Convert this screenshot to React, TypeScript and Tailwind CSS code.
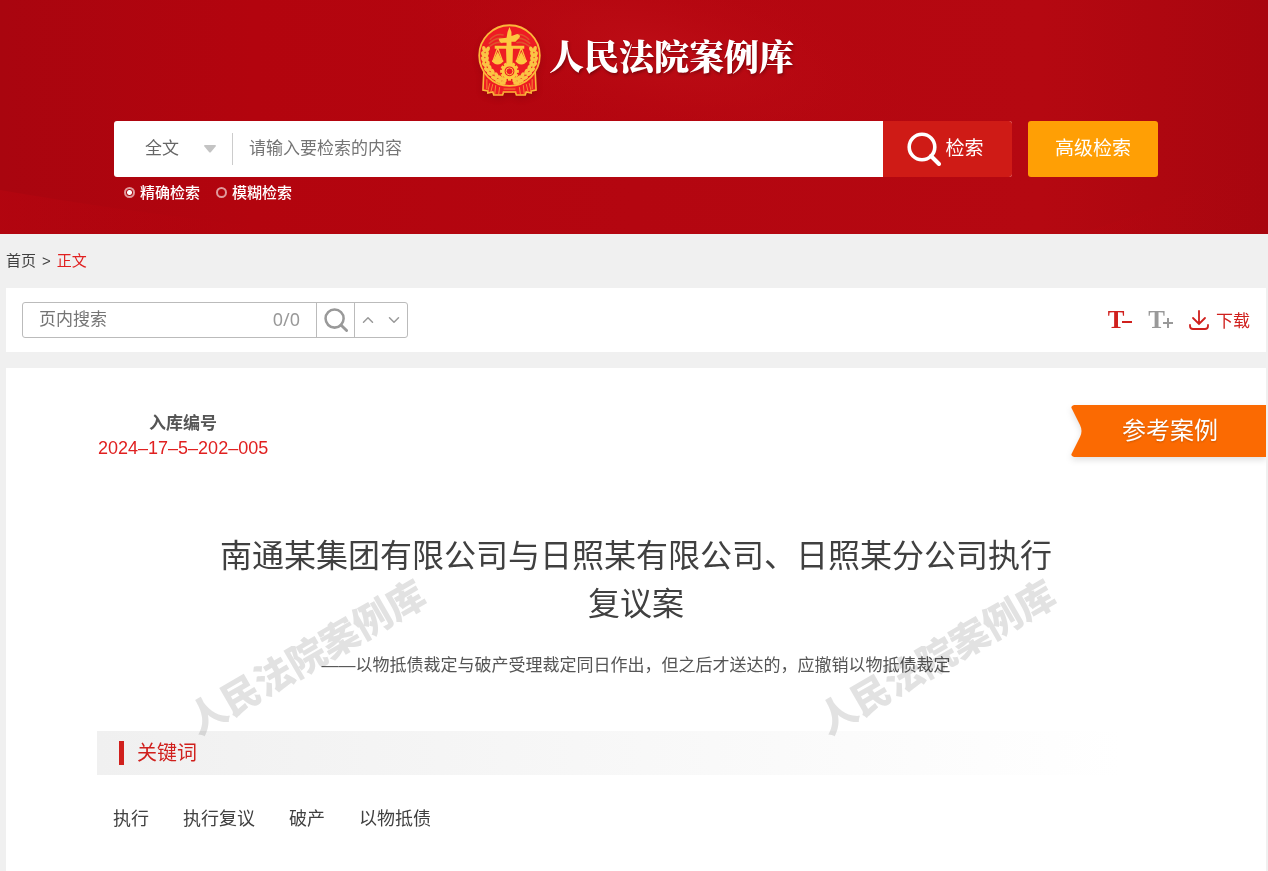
import React from 'react';
import { ChevronDown, ChevronUp } from 'lucide-react';

const keywords = ['执行', '执行复议', '破产', '以物抵债'];

const rayAngles = [0, 30, 60, 90, 120, 150, 180, 210, 240, 270, 300, 330];

const leaves = [
  { x: 8, y: 25, r: 8 },
  { x: 7, y: 30, r: 2 },
  { x: 7, y: 35, r: -6 },
  { x: 8, y: 40, r: -16 },
  { x: 10, y: 45, r: -26 },
  { x: 13, y: 49, r: -36 },
  { x: 17, y: 53, r: -46 },
  { x: 21, y: 56, r: -58 },
  { x: 25, y: 58, r: -70 },
];

const Wreath = () => (
  <g fill="#fbc444">
    {leaves.map((leaf) => (
      <g key={leaf.y} transform={`translate(${leaf.x} ${leaf.y}) rotate(${leaf.r})`}>
        <ellipse cx="-1.8" cy="0" rx="1.9" ry="3.2" transform="rotate(-20)" />
        <ellipse cx="2" cy="0" rx="1.9" ry="3.2" transform="rotate(20)" />
      </g>
    ))}
  </g>
);

const Emblem = () => (
  <svg viewBox="0 0 64 74" className="h-[73px] w-[63px] drop-shadow-md" aria-hidden="true">
    {/* Ribbon */}
    <path d="M6 46 5 67l5 1v2l5-1 1 3h9l1-3h12l1 3h9l1-3 5 1v-2l5-1-1-21z" fill="#ee1c23" stroke="#fbb83a" strokeWidth="1.6" />
    <path d="M9 56v10M12 60l-2 8M15 61l-2 8M18 62l-1 9M22 64l-1 7M26 66h12M25 69h14M42 64l1 7M46 62l1 9M49 61l2 8M52 60l2 8M55 56v10" fill="none" stroke="#f58a30" strokeWidth="1" />
    <circle cx="32" cy="32" r="30.8" fill="#ee1c23" stroke="#fbb83a" strokeWidth="1.8" />
    <path d="M12 16q6-7 14-5M11 20q7-7 15-5M10 24q8-7 15-5M38 11q8-2 14 5M38 15q8-2 15 5M39 19q7-2 15 5" fill="none" stroke="#e0522c" strokeWidth="1.6" />
    <Wreath />
    <g transform="translate(64 0) scale(-1 1)">
      <Wreath />
    </g>
    {/* Pillar and scales */}
    <path d="M30 8 32 3l2 5v4l6-2q4 1 2 4l-4 4h-4v4h13v3H35.500L35 43h-6L28.500 25H17v-3h12v-3h-4q-3 1-4-4l8-1z" fill="#fdc840" />
    <path d="m20 24-5 14h10zm24 0-5 14h10z" fill="none" stroke="#fdc840" strokeWidth="1.2" />
    <path d="m20 28-5 10h10zm24 0-5 10h10z" fill="#fdc840" />
    <path d="M14 37h12q-2 4-6 4t-6-4zm24 0h12q-2 4-6 4t-6-4z" fill="#fdc840" />
    {rayAngles.map((angle) => (
      <path key={angle} d="M30.500 41.500h3v-3h-3z" transform={`rotate(${angle} 32 48)`} fill="#fdc840" />
    ))}
    <circle cx="32" cy="48" r="6.500" fill="#ee1c23" stroke="#fdc840" strokeWidth="3" />
    <circle cx="32" cy="48" r="3.500" fill="#ee1c23" stroke="#fdc840" strokeWidth="1" />
  </svg>
);

const SearchIcon = ({ className }: { className: string }) => (
  <svg viewBox="0 0 34 34" className={className} fill="none" stroke="currentColor" aria-hidden="true">
    <circle cx="15" cy="15" r="12.8" strokeWidth="3.6" />
    <path d="m24 24 8 8" strokeWidth="4" strokeLinecap="round" />
  </svg>
);

const HeaderBackground = () => (
  <svg className="absolute inset-0 h-full w-full" viewBox="0 0 1268 234" preserveAspectRatio="none" aria-hidden="true">
    <defs>
      <linearGradient id="header-base" x1="0" x2="1" y1="0" y2="0">
        <stop offset="0" stopColor="#a9050f" />
        <stop offset="0.2" stopColor="#b3040e" />
        <stop offset="0.5" stopColor="#b40610" />
        <stop offset="0.82" stopColor="#b50811" />
        <stop offset="1" stopColor="#a8060f" />
      </linearGradient>
      <radialGradient id="header-glow">
        <stop offset="0" stopColor="#c01018" stopOpacity="0.7" />
        <stop offset="1" stopColor="#b8060f" stopOpacity="0" />
      </radialGradient>
      <linearGradient id="header-fold" x1="0" x2="1" y1="0" y2="0">
        <stop offset="0" stopColor="#c20510" stopOpacity="0.35" />
        <stop offset="1" stopColor="#b3000d" stopOpacity="0" />
      </linearGradient>
    </defs>
    <path d="M0 0h1268v234H0z" fill="url(#header-base)" />
    <ellipse cx="660" cy="50" rx="260" ry="90" fill="url(#header-glow)" transform="rotate(12 660 50)" />
    <path d="M0 190q150 26 330 44H0z" fill="url(#header-fold)" />
    <path d="M1268 150q-90 55-190 84h190z" fill="url(#header-fold)" opacity="0.4" />
  </svg>
);

const SiteHeader = () => (
  <header className="relative overflow-hidden bg-[#b3060f]">
    <HeaderBackground />
    <div className="relative flex flex-col pt-6 pb-[30px] pl-1">
      <div className="flex items-start justify-center gap-2">
        <Emblem />
        <h1 className="pt-2 text-[35px] leading-[46px] font-black text-white [font-family:'Noto_Serif_CJK_SC','Noto_Sans_CJK_SC',serif] [text-shadow:1px_2px_3px_rgba(0,0,0,0.3)]">
          人民法院案例库
        </h1>
      </div>
      <form className="mx-auto mt-6 w-[1044px] max-w-full" onSubmit={(e) => e.preventDefault()}>
        <div className="flex h-14 gap-4">
          <div className="flex flex-1 overflow-hidden rounded-[3px] bg-white">
            <div className="relative my-3 w-[119px] border-r border-[#ccc]">
              <select
                aria-label="检索范围"
                className="h-full w-full appearance-none bg-transparent pr-8 pl-[31px] text-[17px] text-[#666] outline-none"
              >
                <option>全文</option>
              </select>
              <svg viewBox="0 0 12 8" className="pointer-events-none absolute top-3 right-4 h-2 w-3" fill="#c4c4c4" aria-hidden="true">
                <path d="M0 1q0-1 1-1h10q1 0 1 1L7 7q-1 1-2 0z" />
              </svg>
            </div>
            <input
              aria-label="检索内容"
              placeholder="请输入要检索的内容"
              className="min-w-0 flex-1 px-4 text-[17px] text-[#333] outline-none placeholder:text-[#757575]"
            />
            <button className="flex w-[129px] items-center justify-center gap-1 bg-[#cf1b16] pr-1 text-[19px] text-white">
              <SearchIcon className="h-[34px] w-[34px]" />
              检索
            </button>
          </div>
          <button type="button" className="w-[130px] rounded-[3px] bg-[#ff9f05] text-[19px] text-white">
            高级检索
          </button>
        </div>
        <div className="flex gap-4 pt-1 pl-[10px] text-[15px] leading-[23px] font-medium text-white">
          {['精确检索', '模糊检索'].map((label, i) => (
            <label key={label} className="flex items-center gap-[5px]">
              <input
                type="radio"
                name="mode"
                defaultChecked={i === 0}
                className="h-[11px] w-[11px] appearance-none rounded-full border-2 border-[#e09a9c] checked:bg-[radial-gradient(circle,#fff_2px,transparent_3px)]"
              />
              {label}
            </label>
          ))}
        </div>
      </form>
    </div>
  </header>
);

const Toolbar = () => (
  <div className="flex h-16 items-center justify-between bg-white px-4">
    <div className="flex h-9 w-[386px] rounded-[3px] border border-[#bbb] text-[#999]">
      <input
        aria-label="页内搜索"
        placeholder="页内搜索"
        className="min-w-0 flex-1 pl-4 text-[17px] outline-none placeholder:text-[#757575]"
      />
      <span className="px-4 text-lg leading-8 [font-family:'Noto_Sans',sans-serif]">0/0</span>
      <button aria-label="搜索" className="flex w-[39px] items-center justify-center border-x border-[#bbb]">
        <SearchIcon className="h-6 w-6" />
      </button>
      <div className="flex w-[52px] items-center justify-around">
        <button aria-label="上一个">
          <ChevronUp className="h-[18px] w-[18px]" strokeWidth={2} />
        </button>
        <button aria-label="下一个">
          <ChevronDown className="h-[18px] w-[18px]" strokeWidth={2} />
        </button>
      </div>
    </div>
    <div className="flex items-center gap-4 text-[#d0201d]">
      <button aria-label="缩小字体" className="flex h-7 items-center [font-family:'Liberation_Serif',serif]">
        <span className="text-[25px] leading-7 font-bold">T</span>
        <svg viewBox="0 0 10 10" className="-ml-0.5 h-[10px] w-[10px]" stroke="currentColor" strokeWidth="2" aria-hidden="true">
          <path d="M0 7h10" />
        </svg>
      </button>
      <button aria-label="放大字体" className="flex h-7 items-center text-[#999] [font-family:'Liberation_Serif',serif]">
        <span className="text-[25px] leading-7 font-bold">T</span>
        <svg viewBox="0 0 10 10" className="-ml-0.5 h-[10px] w-[10px] overflow-visible" stroke="currentColor" strokeWidth="2" aria-hidden="true">
          <path d="M0 8h10M5 3v10" />
        </svg>
      </button>
      <a href="#download" className="flex items-center gap-[7px] text-[17px]">
        <svg viewBox="0 0 20 20" className="h-5 w-5" fill="none" stroke="currentColor" strokeWidth="1.8" strokeLinecap="round" aria-hidden="true">
          <path d="M10 1v12M4 8l6 6 6-6M1 15v1q0 3 3 3h12q3 0 3-3v-1" />
        </svg>
        <span className="pt-1">下载</span>
      </a>
    </div>
  </div>
);

const Watermark = ({ className }: { className: string }) => (
  <span
    aria-hidden="true"
    className={`pointer-events-none absolute z-10 -rotate-30 text-[38px] leading-[40px] font-black whitespace-nowrap text-[#e2e2e2] mix-blend-multiply ${className}`}
  >
    人民法院案例库
  </span>
);

const CaseBadge = () => (
  <div className="relative h-[54px] w-[196px]">
    <svg viewBox="0 0 196 54" className="absolute inset-0 h-full w-full overflow-visible drop-shadow-md" aria-hidden="true">
      <path d="M4 1h192v52H4q-4-1-2-4l8-16q3-6 0-12L2 5Q0 2 4 1z" fill="#fb6a02" />
    </svg>
    <span className="relative block pl-[52px] text-2xl leading-[54px] text-white [text-shadow:0_1px_2px_rgba(0,0,0,0.2)]">
      参考案例
    </span>
  </div>
);

const App: React.FC = () => {
  return (
    <div className="min-h-screen bg-[#f0f0f0] text-[#404040] [font-family:'Liberation_Sans','Noto_Sans_CJK_SC',sans-serif]">
      <SiteHeader />
      <div className="pr-[2px] pl-[6px]">
        <nav className="flex h-[54px] items-center gap-[6px] text-[15px]">
          <a href="#home">首页</a>
          <span>&gt;</span>
          <a href="#text" className="text-[#e02020]">正文</a>
        </nav>

        <Toolbar />

        <main className="relative mt-4 min-h-[503px] overflow-hidden bg-white pt-9">
          <Watermark className="top-[270px] left-[168px]" />
          <Watermark className="top-[270px] left-[798px]" />

          <div className="flex items-start justify-between pl-[92px]">
            <div className="pt-2 text-center">
              <p className="text-[17px] leading-6 font-bold text-[#555]">入库编号</p>
              <p className="text-lg leading-6 text-[#e02020]">2024–17–5–202–005</p>
            </div>
            <CaseBadge />
          </div>

          <article className="mx-auto w-[1078px] max-w-full">
            <h2 className="mx-auto mt-[72px] max-w-[860px] text-center text-[32px] leading-[48px]">
              南通某集团有限公司与日照某有限公司、日照某分公司执行复议案
            </h2>
            <p className="mt-6 text-center text-[17px] leading-7 text-[#555]">
              ——以物抵债裁定与破产受理裁定同日作出，但之后才送达的，应撤销以物抵债裁定
            </p>
            <h3 className="mt-[51px] flex h-11 items-center bg-linear-to-r from-[#f0f0f0] to-white to-95% pl-[22px] text-xl text-[#d0201d]">
              <span className="mr-[13px] h-6 w-[5px] bg-[#d0201d]" />
              关键词
            </h3>
            <ul className="flex gap-[34px] py-[30px] pl-4 text-lg leading-7">
              {keywords.map((keyword) => (
                <li key={keyword}>{keyword}</li>
              ))}
            </ul>
          </article>
        </main>
      </div>
    </div>
  );
};

export default App;
